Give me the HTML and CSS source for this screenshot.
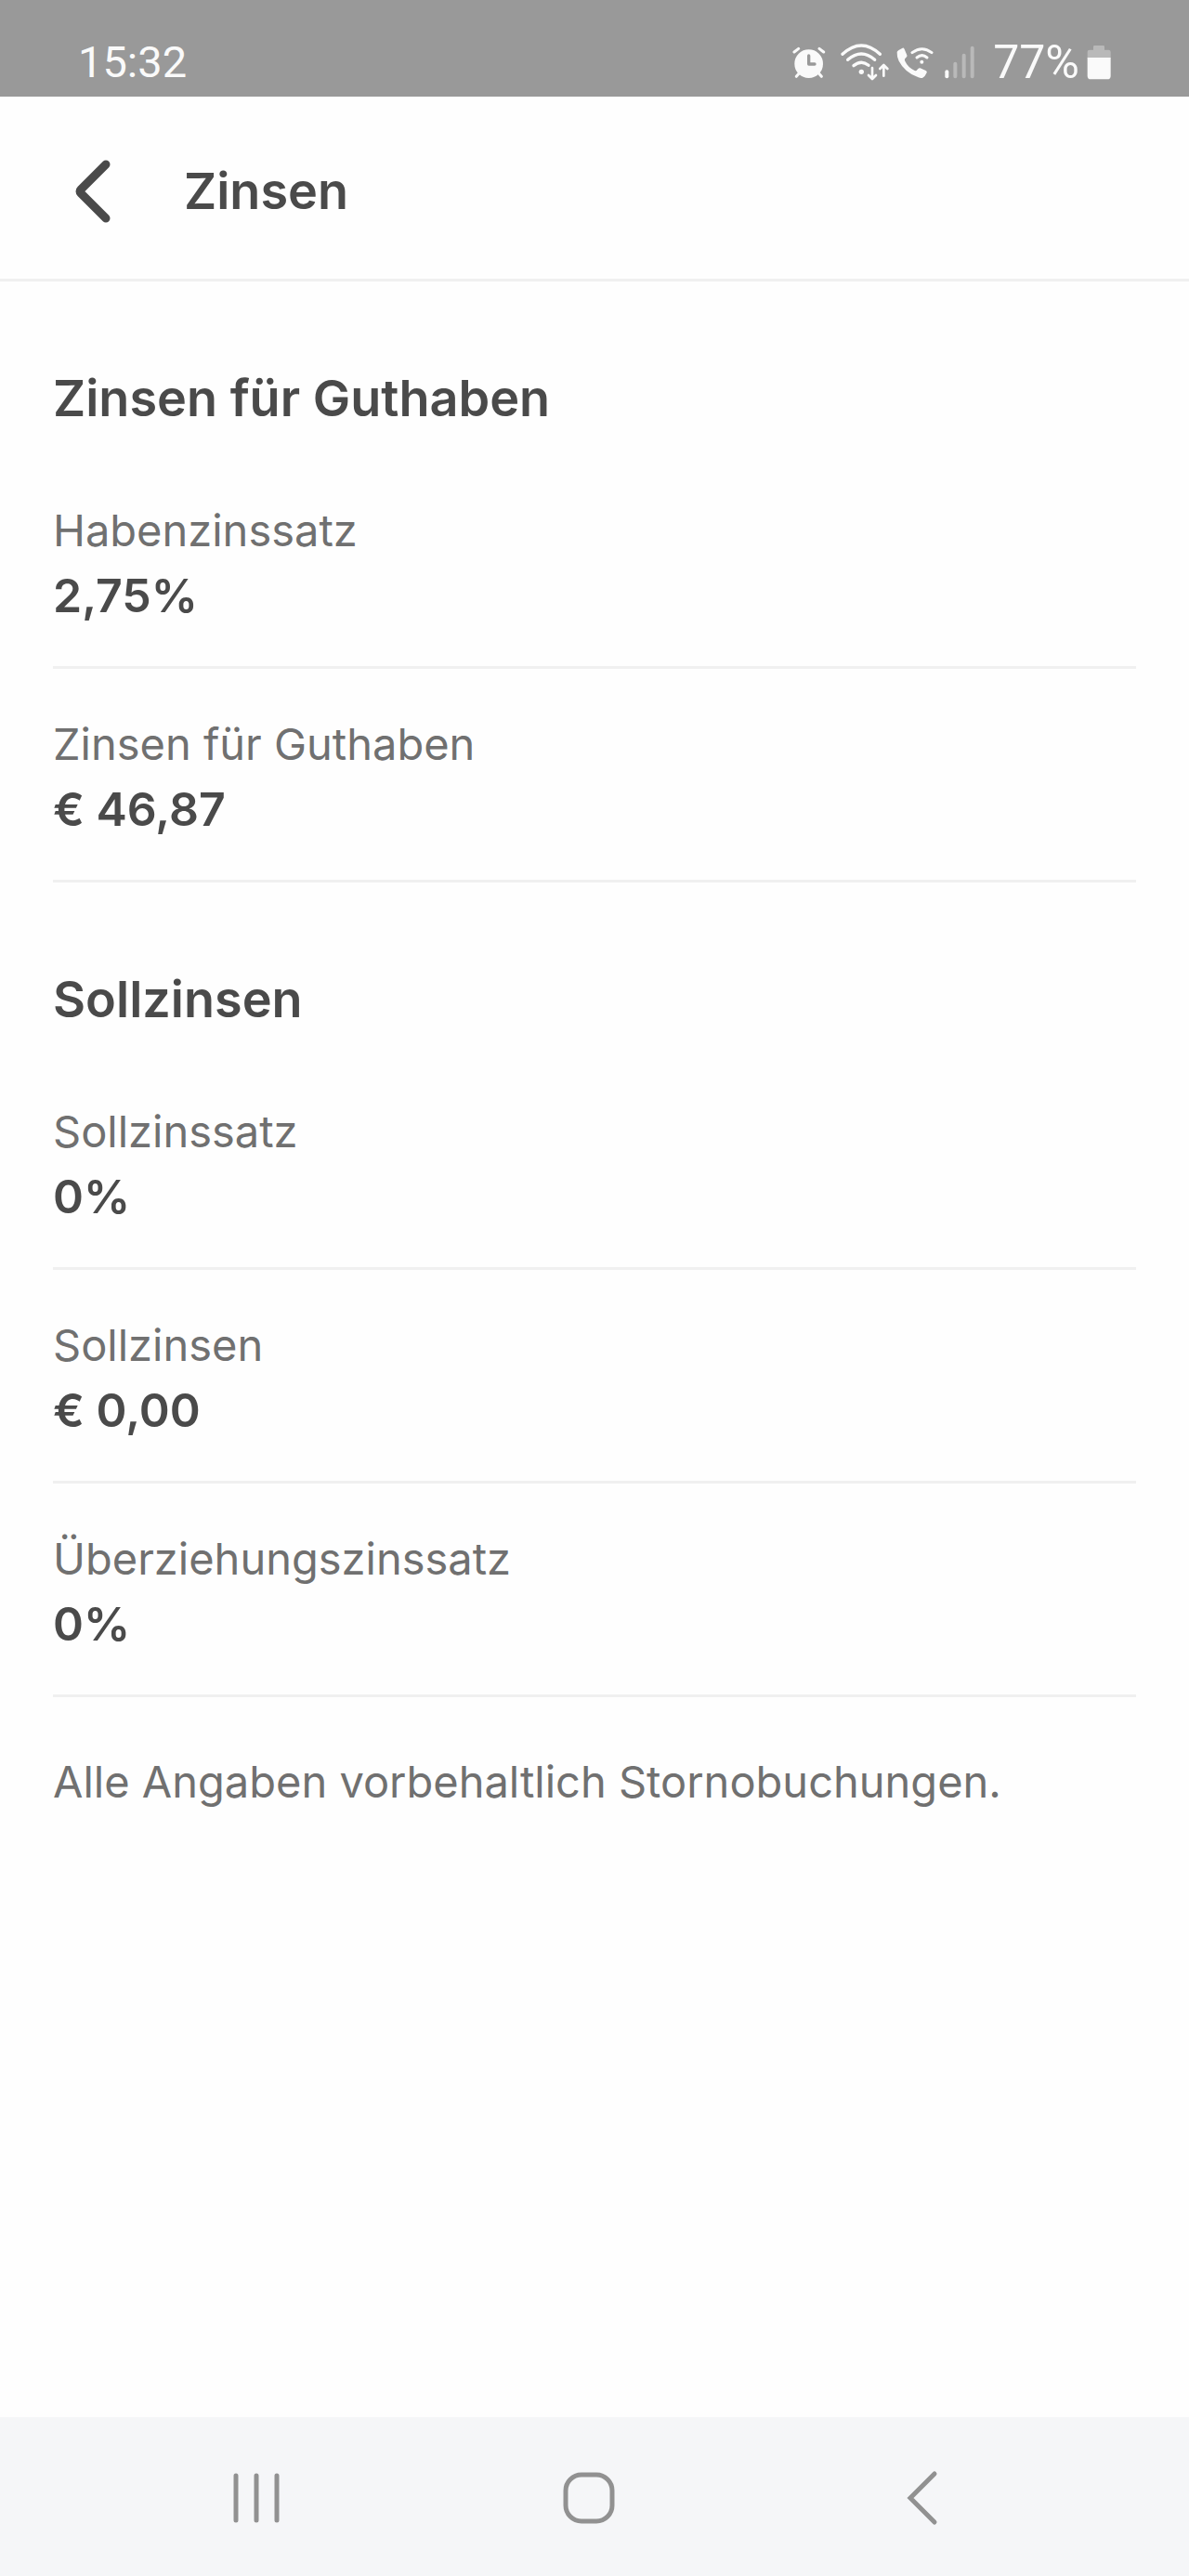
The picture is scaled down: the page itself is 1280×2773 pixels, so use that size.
FILE: index.html
```html
<!DOCTYPE html>
<html lang="de">
<head>
  <meta charset="UTF-8">
  <meta name="viewport" content="width=device-width, initial-scale=1.0">
  <title>Zinsen</title>
  <link rel="stylesheet" href="styles.css">
</head>
<body>
  <div class="status-bar">
    <span class="clock">15:32</span>
    <div class="status-icons">
      <!-- Wecker -->
      <svg width="44" height="40" viewBox="102 81 132 120">
        <g fill="none" stroke="#fafafa" stroke-width="9" stroke-linecap="round">
          <path d="M108 108 L122 97 M203 108 L189 97 M115 187 L128 172 M196 187 L183 172"/>
        </g>
        <circle cx="155" cy="146" r="46" fill="#fafafa"/>
        <path d="M155 120 V147 H174" fill="none" stroke="#999" stroke-width="10" stroke-linecap="round" stroke-linejoin="round"/>
      </svg>
      <!-- WLAN -->
      <svg width="52" height="40" viewBox="258 81 156 120">
        <g fill="none" stroke="#fafafa" stroke-width="10" stroke-linecap="round" stroke-linejoin="round">
          <path d="M264 115 Q325 59 385 115"/>
          <path d="M281 133 Q325 95 368 133"/>
          <path d="M300 152 Q325 132 348 151"/>
          <path stroke-width="8" d="M360 159 V194 M348 183 L360 195 L372 183"/>
          <path stroke-width="8" d="M397 185 V151 M385 162 L397 150 L409 162"/>
        </g>
        <circle cx="325" cy="172" r="8" fill="#fafafa"/>
      </svg>
      <!-- WLAN-Anruf -->
      <svg width="44" height="40" viewBox="435 81 132 120">
        <path d="M437 108 Q439 102 455 95 Q459 94 461 99 L469 118 Q471 123 466 126 Q460 130 462 136 Q472 158 494 168 Q499 170 503 164 Q507 158 512 160 L530 168 Q535 170 533 175 Q528 187 520 191 Q514 193 506 190 Q462 174 443 137 Q436 121 437 108Z" fill="#fafafa"/>
        <g fill="none" stroke="#fafafa" stroke-width="9" stroke-linecap="round">
          <path d="M486 110 Q518 86 549 110"/>
          <path d="M501 126 Q518 112 534 126"/>
        </g>
        <circle cx="517" cy="140" r="6" fill="#fafafa"/>
      </svg>
      <!-- Mobilfunk -->
      <svg width="40" height="40" viewBox="594 81 120 120">
        <g fill="none" stroke="#b9b9b9" stroke-width="12" stroke-linecap="round">
          <path stroke="#fafafa" d="M601 172 V187"/>
          <path d="M628 146 V187 M656 119 V187 M683 95 V187"/>
        </g>
      </svg>
      <span class="battery-level">77%</span>
      <!-- Akku -->
      <svg width="26" height="40" viewBox="1051 81 78 120">
        <path d="M1053 128 V108 Q1053 101 1060 101 H1072 V91 Q1072 87 1076 87 H1104 Q1108 87 1108 91 V101 H1121 Q1128 101 1128 108 V128Z" fill="#b9b9b9"/>
        <path d="M1053 126 H1128 V185 Q1128 196 1117 196 H1064 Q1053 196 1053 185Z" fill="#fafafa"/>
      </svg>
    </div>
  </div>

  <header class="header">
    <button class="back-button" type="button" aria-label="Zurück">
      <svg width="40" height="70" viewBox="0 0 40 70">
        <path d="M34 6 L7 33 Q5 35 7 37 L34 64" fill="none" stroke="#4a4a4a" stroke-width="9" stroke-linecap="round" stroke-linejoin="round"/>
      </svg>
    </button>
    <h1>Zinsen</h1>
  </header>

  <main class="content">
    <section>
      <h2>Zinsen für Guthaben</h2>
      <dl>
        <div class="row">
          <dt>Habenzinssatz</dt>
          <dd>2,75%</dd>
        </div>
        <div class="row">
          <dt>Zinsen für Guthaben</dt>
          <dd>€ 46,87</dd>
        </div>
      </dl>
    </section>

    <section>
      <h2>Sollzinsen</h2>
      <dl>
        <div class="row">
          <dt>Sollzinssatz</dt>
          <dd>0%</dd>
        </div>
        <div class="row">
          <dt>Sollzinsen</dt>
          <dd>€ 0,00</dd>
        </div>
        <div class="row">
          <dt>Überziehungszinssatz</dt>
          <dd>0%</dd>
        </div>
      </dl>
    </section>

    <p class="note">Alle Angaben vorbehaltlich Stornobuchungen.</p>
  </main>

  <nav class="nav-bar">
    <button type="button" aria-label="Letzte Apps">
      <svg width="60" height="60" viewBox="0 0 60 60">
        <path d="M8 6 V54 M30 6 V54 M52 6 V54" fill="none" stroke="#919191" stroke-width="5" stroke-linecap="round"/>
      </svg>
    </button>
    <button type="button" aria-label="Startseite">
      <svg width="60" height="60" viewBox="0 0 60 60">
        <rect x="5" y="5" width="50" height="50" rx="17" fill="none" stroke="#919191" stroke-width="5"/>
      </svg>
    </button>
    <button type="button" aria-label="Zurück">
      <svg width="60" height="60" viewBox="0 0 60 60">
        <path d="M44 4 L18 30 L44 56" fill="none" stroke="#919191" stroke-width="5" stroke-linecap="round"/>
      </svg>
    </button>
  </nav>
</body>
</html>
```
FILE: styles.css
```css
* {
  box-sizing: border-box;
}

body {
  margin: 0;
  min-height: 100vh;
  display: flex;
  flex-direction: column;
  background: #fefefe;
  color: #4a4a4a;
  font-family: Inter, "Liberation Sans", sans-serif;
}

h1, h2, dl, dd, p {
  margin: 0;
}

svg {
  display: block;
}

button {
  padding: 0;
  border: none;
  background: none;
  cursor: pointer;
}

/* Statusleiste */
.status-bar {
  display: flex;
  justify-content: space-between;
  align-items: center;
  padding: 38px 84px 8px;
  background: #999;
  color: #fafafa;
  font-family: Roboto, sans-serif;
  line-height: 58px;
}

.clock {
  font-size: 47px;
}

.status-icons {
  display: flex;
  align-items: center;
  gap: 8px;
}

.battery-level {
  padding-left: 4px;
  font-size: 50px;
}

/* Kopfzeile */
.header {
  display: flex;
  align-items: center;
  gap: 78px;
  padding: 60px 80px 52px;
  border-bottom: 3px solid #f0f0f0;
}

h1, h2 {
  font-size: 54px;
  font-weight: 600;
  line-height: 84px;
}

/* Inhalt */
.content {
  flex: 1;
  padding: 0 57px;
}

h2 {
  padding-top: 84px;
}

dl {
  padding-top: 19px;
}

.row {
  padding: 46px 0 40px;
  border-bottom: 3px solid #f0f0f0;
}

dt, .note {
  color: #707070;
  font-size: 47px;
  line-height: 70px;
}

dd {
  font-size: 50px;
  font-weight: 600;
  line-height: 71px;
}

.note {
  padding: 56px 0;
}

/* Navigation */
.nav-bar {
  display: flex;
  padding: 57px 109px 54px 97px;
  background: #f5f6f8;
}

.nav-bar button {
  flex: 1;
  display: flex;
  justify-content: center;
}
```
